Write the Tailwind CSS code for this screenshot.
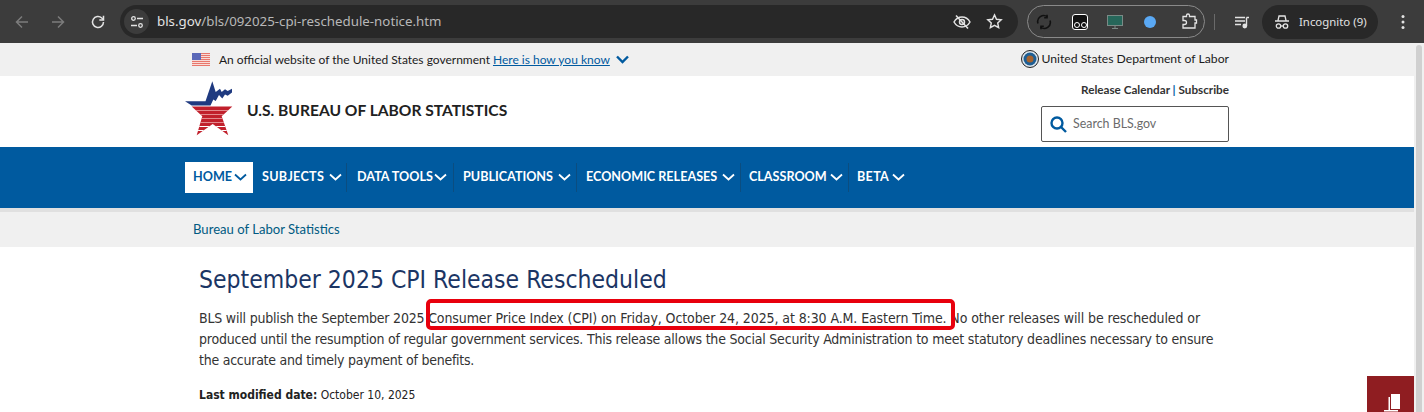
<!doctype html>
<html>
<head>
<meta charset="utf-8">
<script src="https://cdn.jsdelivr.net/npm/@tailwindcss/browser@4"></script>
</head>
<body class="relative h-[412px] w-[1424px] overflow-hidden bg-white font-['Lato',sans-serif]">
  <!-- Browser chrome -->
  <div class="flex h-[43px] items-center bg-[#3c3c3c] text-[#e3e3e3] font-['Noto_Sans',sans-serif]">
    <div class="flex w-[120px] items-center pl-[14px] gap-[20px]">
      <svg class="size-[16px] text-[#7c7c7c]" viewBox="0 0 16 16" fill="none" stroke="currentColor" stroke-width="1.5"><path d="M14 8H2.5M8 2.5 2.5 8 8 13.5"/></svg>
      <svg class="size-[16px] text-[#7c7c7c]" viewBox="0 0 16 16" fill="none" stroke="currentColor" stroke-width="1.5"><path d="M2 8h11.5M8 2.5 13.5 8 8 13.5"/></svg>
      <svg class="size-[16px] ml-[4px]" viewBox="0 0 16 16" fill="none" stroke="currentColor" stroke-width="1.5"><path d="M13.5 8A5.500 5.500 0 1 1 11.800 4L13.500 5.700"/><path d="M13.500 1.800v4.200H9.300"/></svg>
    </div>
    <div class="flex h-[33px] w-[898px] items-center rounded-full bg-[#282828] pl-[4px]">
      <div class="flex size-[25px] items-center justify-center rounded-full bg-[#3c3c3c]">
        <svg class="size-[14px]" viewBox="0 0 14 14" fill="none" stroke="currentColor" stroke-width="1.300"><circle cx="3.500" cy="3.500" r="1.800"/><path d="M7 3.500h6M1 10.500h6"/><circle cx="10.500" cy="10.500" r="1.800"/></svg>
      </div>
      <span class="ml-[8px] text-[13.3px] text-[#e3e3e3]">bls.gov<span class="text-[#b8b8b8]">/bls/092025-cpi-reschedule-notice.htm</span></span>
      <div class="ml-auto flex items-center gap-[15px] pr-[15px]">
        <svg class="size-[18px]" viewBox="0 0 18 18" fill="none" stroke="currentColor" stroke-width="1.500"><path d="M1 9c2-3.500 5-5 8-5s6 1.500 8 5c-2 3.500-5 5-8 5s-6-1.500-8-5Z"/><circle cx="9" cy="9" r="2.500"/><path d="M3 2.500 15 15.500"/></svg>
        <svg class="size-[17px]" viewBox="0 0 18 18" fill="none" stroke="currentColor" stroke-width="1.500"><path d="m9 2 2.100 4.600 5 .5-3.700 3.400 1 4.900L9 13l-4.400 2.400 1-4.900L1.900 7.100l5-.5Z"/></svg>
      </div>
    </div>
    <div class="ml-[9px] flex h-[33px] w-[178px] items-center rounded-full border border-[#8a8a8a] pl-[8px]">
      <svg class="size-[16px] text-[#111]" viewBox="0 0 16 16" fill="none" stroke="currentColor" stroke-width="1.600"><path d="M2 9.500A6 6 0 0 1 11.500 3M14 6.500A6 6 0 0 1 4.500 13"/><path d="M11 .8v3h-2.800M5 15.200v-3h2.800"/></svg>
      <div class="relative ml-[20px] h-[16px] w-[16px] rounded-[3px] border-[1.500px] border-white bg-[#111]">
        <span class="absolute bottom-[1px] left-[0.500px] size-[6px] rounded-full border border-white"></span>
        <span class="absolute bottom-[1px] right-[0.500px] size-[6px] rounded-full border border-white"></span>
      </div>
      <svg class="ml-[19px] size-[16px]" viewBox="0 0 16 16"><rect x=".5" y="1.500" width="15" height="10" fill="#26675a" stroke="#7a8a86"/><path d="M5 14.500h6M8 12v2.500" stroke="#7a8a86"/></svg>
      <span class="ml-[21px] size-[12px] rounded-full bg-[#5aa9f5]"></span>
      <svg class="ml-[25px] size-[17px]" viewBox="0 0 17 17" fill="none" stroke="currentColor" stroke-width="1.300"><path d="M2 3.500h3.500V2.500a1.500 1.500 0 0 1 3 0v1H14v3.500h1.500v3H14V15H2v-3.500h1.500a2 2 0 0 0 0-4H2Z"/></svg>
    </div>
    <span class="ml-[9px] h-[16px] w-px bg-[#6a6a6a]"></span>
    <svg class="ml-[19px] size-[16px]" viewBox="0 0 16 16" fill="none" stroke="currentColor" stroke-width="1.400"><path d="M1 3.500h10M1 7h10M1 10.500h6"/><path d="M12.500 3.500h2.500M12.500 3.500V12"/><circle cx="10.800" cy="12" r="1.700" fill="currentColor"/></svg>
    <div class="ml-[12px] flex h-[34px] w-[116px] items-center rounded-full bg-[#282828] pl-[12px]">
      <svg class="size-[16px]" viewBox="0 0 16 16" fill="none" stroke="currentColor" stroke-width="1.300"><path d="M4 6.500 5 2h6l1 4.500M1 7h14"/><circle cx="4.500" cy="12" r="2.200"/><circle cx="11.500" cy="12" r="2.200"/><path d="M6.700 12h2.600"/></svg>
      <span class="ml-[9px] text-[11.4px] text-[#e3e3e3]">Incognito (9)</span>
    </div>
    <svg class="ml-[17px] size-[16px]" viewBox="0 0 16 16" fill="#e3e3e3"><circle cx="8" cy="2.500" r="1.500"/><circle cx="8" cy="8" r="1.500"/><circle cx="8" cy="13.500" r="1.500"/></svg>
  </div>

  <!-- Page -->
  <div class="relative w-[1414px]">
    <!-- Gov banner -->
    <div class="flex h-[33px] items-center bg-[#f0f0f0] pl-[192px] pr-[185px] text-[12px] text-[#1b1b1b]">
      <svg class="h-[13px] w-[18px]" viewBox="0 0 18 13"><rect width="18" height="13" fill="#f8dcd8"/><g fill="#e8776c"><rect width="18" height="1"/><rect y="2" width="18" height="1"/><rect y="4" width="18" height="1"/><rect y="6" width="18" height="1"/><rect y="8" width="18" height="1"/><rect y="10" width="18" height="1"/><rect y="12" width="18" height="1"/></g><rect width="9" height="7" fill="#5a68b8"/></svg>
      <span class="ml-[9px]">An official website of the United States government</span>
      <span class="ml-[3px] text-[#005a9f] underline">Here is how you know</span>
      <svg class="ml-[6px] h-[9px] w-[13px] text-[#005a9f]" viewBox="0 0 13 9" fill="none" stroke="currentColor" stroke-width="2.400"><path d="M1 1.500 6.500 7 12 1.500"/></svg>
      <div class="ml-auto flex items-center">
        <svg class="size-[18px]" viewBox="0 0 18 18"><circle cx="9" cy="9" r="8.500" fill="#dfe7ee" stroke="#222"/><circle cx="9" cy="9" r="6.500" fill="#1f5f94"/><circle cx="9" cy="9" r="3.500" fill="#a5632f"/></svg>
        <span class="ml-[3px] text-[12.200px]">United States Department of Labor</span>
      </div>
    </div>
    <!-- Header -->
    <div class="flex h-[71px] bg-white pl-[185px] pr-[185px]">
      <svg class="mt-[4px] h-[57px] w-[48px]" viewBox="0 0 48 57">
        <defs><clipPath id="star"><path d="M6.700 26.500H47.300L36.700 36.300 43.300 55.300 27.700 44 11.700 55.300 17.300 36.300Z"/></clipPath></defs>
        <path fill="#1f3a80" d="M0 21.300H20.500L27.300 1.300 30.700 12 35 8.700 36.700 12 40 9.300 42.700 11 47 8.700V12.500L42.700 15.700 40 14.500 37.300 18.500 34 15 30.700 21 28.300 19.500 25.500 25.500H6.700Z"/>
        <path fill="#c1202c" d="M6.700 26.500H47.300L36.700 36.300 43.300 55.300 27.700 44 11.700 55.300 17.300 36.300Z"/>
        <g clip-path="url(#star)">
          <g fill="#f3b9b9"><rect y="30" width="48" height=".7"/><rect y="34" width="48" height=".7"/><rect y="38" width="48" height=".7"/><rect y="42" width="48" height=".7"/></g>
          <g fill="#fff"><rect y="46" width="48" height="1"/><rect y="50" width="48" height="1"/></g>
        </g>
      </svg>
      <div class="ml-[14px] mt-[23px] text-[15.600px] leading-[22px] font-bold text-[#212121]">U.S. BUREAU OF LABOR STATISTICS</div>
      <div class="ml-auto flex flex-col items-end pt-[5px]">
        <div class="text-[11.700px] leading-[16px] font-bold text-[#333]">Release Calendar <span class="text-[#005a9f]">|</span> Subscribe</div>
        <div class="mt-[9px] flex h-[36px] w-[188px] items-center rounded-[2px] border border-[#555] pl-[8px]">
          <svg class="size-[17px] text-[#005a9f]" viewBox="0 0 17 17" fill="none" stroke="currentColor" stroke-width="2.400"><circle cx="7" cy="7" r="5.500"/><path d="m11 11 5 5"/></svg>
          <span class="ml-[6px] text-[12.400px] text-[#6b6b6b]">Search BLS.gov</span>
        </div>
      </div>
    </div>
    <!-- Nav -->
    <div class="flex h-[61px] items-center bg-[#005a9f] pl-[185px] text-[12.600px] font-bold whitespace-nowrap text-white">
      <div class="flex h-[31px] w-[68px] items-center bg-white pl-[8px] text-[#005a9f]"><span class="w-[38px]">HOME</span><svg class="mb-[2px] ml-[3px] h-[8px] w-[13px]" viewBox="0 0 13 8" fill="none" stroke="currentColor" stroke-width="1.800"><path d="m1 1.500 5.500 5 5.500-5"/></svg></div>
      <div class="flex h-[29px] w-[94px] items-center border-r border-[#0b4d80] pl-[9px]"><span class="w-[64px] tracking-[0.3px]">SUBJECTS</span><svg class="mb-[2px] ml-[3px] h-[8px] w-[13px]" viewBox="0 0 13 8" fill="none" stroke="currentColor" stroke-width="1.800"><path d="m1 1.500 5.500 5 5.500-5"/></svg></div>
      <div class="flex h-[29px] w-[107px] items-center border-r border-[#0b4d80] pl-[10px]"><span class="w-[75px]">DATA TOOLS</span><svg class="mb-[2px] ml-[2px] h-[8px] w-[13px]" viewBox="0 0 13 8" fill="none" stroke="currentColor" stroke-width="1.800"><path d="m1 1.500 5.500 5 5.500-5"/></svg></div>
      <div class="flex h-[29px] w-[123px] items-center border-r border-[#0b4d80] pl-[9px]"><span class="w-[91px]">PUBLICATIONS</span><svg class="mb-[2px] ml-[4px] h-[8px] w-[13px]" viewBox="0 0 13 8" fill="none" stroke="currentColor" stroke-width="1.800"><path d="m1 1.500 5.500 5 5.500-5"/></svg></div>
      <div class="flex h-[29px] w-[164px] items-center border-r border-[#0b4d80] pl-[9px]"><span class="w-[132px]">ECONOMIC RELEASES</span><svg class="mb-[2px] ml-[4px] h-[8px] w-[13px]" viewBox="0 0 13 8" fill="none" stroke="currentColor" stroke-width="1.800"><path d="m1 1.500 5.500 5 5.500-5"/></svg></div>
      <div class="flex h-[29px] w-[108px] items-center border-r border-[#0b4d80] pl-[8px]"><span class="w-[77px]">CLASSROOM</span><svg class="mb-[2px] ml-[4px] h-[8px] w-[13px]" viewBox="0 0 13 8" fill="none" stroke="currentColor" stroke-width="1.800"><path d="m1 1.500 5.500 5 5.500-5"/></svg></div>
      <div class="flex h-[29px] items-center pl-[8px]"><span class="w-[32px] tracking-[0.3px]">BETA</span><svg class="mb-[2px] ml-[3px] h-[8px] w-[13px]" viewBox="0 0 13 8" fill="none" stroke="currentColor" stroke-width="1.800"><path d="m1 1.500 5.500 5 5.500-5"/></svg></div>
    </div>
    <!-- Breadcrumb -->
    <div class="flex h-[39px] items-center border-t-4 border-[#e0e0e0] bg-[#f0f0f0] pl-[193px] text-[13.100px] text-[#005a82]">Bureau of Labor Statistics</div>
    <!-- Content -->
    <div class="pl-[199px] text-[#333] text-[14px] leading-[21px] font-['DejaVu_Sans',sans-serif] font-stretch-condensed">
      <h1 class="mt-[17px] text-[24.500px] leading-[32px] text-[#1b3564]">September 2025 CPI Release Rescheduled</h1>
      <p class="mt-[12px]"><span class="tracking-[-0.2px]">BLS will publish the September 2025 </span><span class="tracking-[-0.1px]">Consumer Price Index (CPI) on Friday, October 24, 2025, at 8:30 A.M. Eastern Time. No other releases will be rescheduled or</span><br><span class="tracking-[-0.21px]">produced until the resumption of regular government services. This release allows the Social Security Administration to meet statutory deadlines necessary to ensure</span><br><span class="tracking-[-0.25px]">the accurate and timely payment of benefits.</span></p>
      <p class="mt-[14px] text-[12px] text-[#222]"><b>Last modified date:</b> October 10, 2025</p>
    </div>
    <!-- Highlight annotation -->
    <div class="absolute left-[426px] top-[256px] h-[31px] w-[529px] rounded-[5px] border-4 border-[#e8000d]"></div>
    <!-- Side tab -->
    <div class="absolute left-[1367px] top-[333px] flex h-[36px] w-[47px] items-end justify-center overflow-hidden bg-[#8f1d21]">
      <svg class="mb-[-1px] ml-[4px] h-[20px] w-[18px]" viewBox="0 0 18 20" fill="#fff"><path d="M7 1h9v15H7Z"/><path d="M4.500 4H6v13h8v1.500H0V17h4.500Z"/></svg>
    </div>
  </div>
  <!-- Scrollbar -->
  <div class="absolute right-0 top-[43px] h-[369px] w-[10px] bg-[#f0f0f0]">
    <div class="absolute bottom-0 left-[2px] top-[2px] w-[6px] rounded-t-[3px] bg-[#d0d0d0]"></div>
  </div>
</body>
</html>
